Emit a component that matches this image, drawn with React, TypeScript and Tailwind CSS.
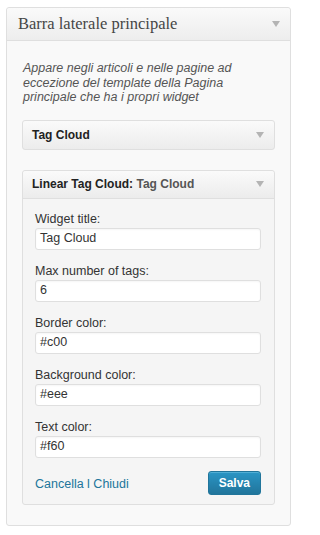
const Arrow = () => (
  <svg width="8" height="6" viewBox="0 0 8 6" className="shrink-0">
    <path d="M0 0 H8 L4 6 Z" fill="#b4b4b4" />
  </svg>
);

function Field({ label, value }: { label: string; value: string }) {
  return (
    <div className="mb-[13px]">
      <div className="text-[12.5px] leading-[16px] text-[#333] h-[16px] mb-[1px]">{label}</div>
      <div className="h-[22px] bg-white border border-[#dfdfdf] rounded-[3px] px-[4px] flex items-center text-[12.5px] text-[#333] shadow-[inset_0_1px_2px_rgba(0,0,0,0.04)]">
        {value}
      </div>
    </div>
  );
}

export default function App() {
  return (
    <div className="w-[299px] h-[535px] bg-white pt-[7px] pl-[6px] font-['Liberation_Sans',Arial,sans-serif]">
      <div className="w-[285px] h-[519px] border border-[#dfdfdf] rounded-[3px] bg-[#f9f9f9] flex flex-col">
        <div className="h-[33px] flex items-center justify-between pl-[11px] pr-[10px] border-b border-[#dfdfdf] bg-gradient-to-b from-[#fafafa] to-[#ededed] rounded-t-[3px]">
          <span className="font-['Liberation_Serif','Times_New_Roman',serif] text-[16.5px] text-[#464646]">
            Barra laterale principale
          </span>
          <Arrow />
        </div>
        <div className="px-[15px] pt-[20px]">
          <p className="italic text-[12.5px] leading-[14.5px] text-[#555] px-[1px]">
            Appare negli articoli e nelle pagine ad eccezione del template della Pagina principale che ha i propri widget
          </p>
          <div className="mt-[15px] h-[30px] border border-[#dfdfdf] rounded-[3px] bg-gradient-to-b from-[#fafafa] to-[#ececec] flex items-center justify-between pl-[9px] pr-[10px]">
            <span className="font-bold text-[12px] text-[#222]">Tag Cloud</span>
            <Arrow />
          </div>
          <div className="mt-[20px] border border-[#dfdfdf] rounded-[3px] bg-[#f5f5f5]">
            <div className="h-[28px] flex items-center justify-between pl-[9px] pr-[10px] border-b border-[#dfdfdf] bg-gradient-to-b from-[#fafafa] to-[#ececec] rounded-t-[3px]">
              <span className="font-bold text-[12px] text-[#222]">
                Linear Tag Cloud: <span className="text-[#555]">Tag Cloud</span>
              </span>
              <Arrow />
            </div>
            <div className="pl-[12px] pr-[13px] pt-[12px] pb-[9px]">
              <Field label="Widget title:" value="Tag Cloud" />
              <Field label="Max number of tags:" value="6" />
              <Field label="Border color:" value="#c00" />
              <Field label="Background color:" value="#eee" />
              <Field label="Text color:" value="#f60" />
              <div className="flex items-center justify-between mt-[0px]">
                <span className="text-[12.5px] text-[#21759b] mt-[4px]">Cancella l Chiudi</span>
                <div className="h-[24px] px-[10px] rounded-[3px] border border-[#21759b] bg-gradient-to-b from-[#2a95c5] to-[#21759b] text-white font-bold text-[12px] flex items-center shadow-[inset_0_1px_0_rgba(120,200,230,0.5)]">
                  Salva
                </div>
              </div>
            </div>
          </div>
        </div>
      </div>
    </div>
  );
}
